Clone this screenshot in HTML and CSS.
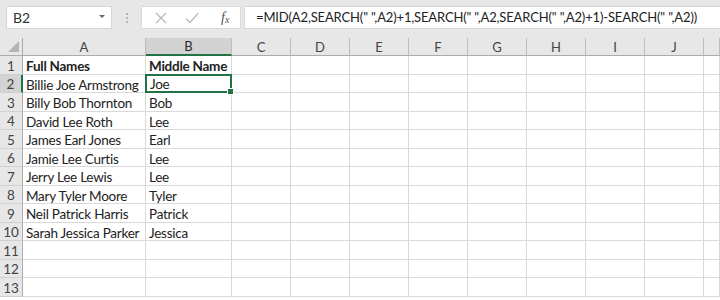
FILE: index.html
```html
<!DOCTYPE html>
<html>
<head>
<meta charset="utf-8">
<link rel="stylesheet" href="styles.css">
</head>
<body>
<div class="app">
  <div class="toolbar">
    <div class="namebox"><span>B2</span><span class="caret"></span></div>
    <div class="grip"><i></i><i></i><i></i></div>
    <div class="fbuttons">
      <svg class="ico x" width="12" height="12" viewBox="0 0 12 12"><path d="M1 1 L11 11 M11 1 L1 11" stroke="#b9b9b9" stroke-width="1.3" fill="none"/></svg>
      <svg class="ico ok" width="14" height="12" viewBox="0 0 14 12"><path d="M1 6.5 L5 10.5 L13 1.5" stroke="#b9b9b9" stroke-width="1.3" fill="none"/></svg>
      <span class="fx">f<sub>x</sub></span>
    </div>
    <div class="formula">=MID(A2,SEARCH(" ",A2)+1,SEARCH(" ",A2,SEARCH(" ",A2)+1)-SEARCH(" ",A2))</div>
  </div>
  <div class="sheet">
    <div class="hd corner"><span class="tri"></span></div>
    <div class="hd col">A</div>
    <div class="hd col sel">B</div>
    <div class="hd col">C</div>
    <div class="hd col">D</div>
    <div class="hd col">E</div>
    <div class="hd col">F</div>
    <div class="hd col">G</div>
    <div class="hd col">H</div>
    <div class="hd col">I</div>
    <div class="hd col">J</div>
    <div class="hd col"></div>

    <div class="hd row">1</div><div class="c b">Full Names</div><div class="c b">Middle Name</div><div class="c"></div><div class="c"></div><div class="c"></div><div class="c"></div><div class="c"></div><div class="c"></div><div class="c"></div><div class="c"></div><div class="c"></div>
    <div class="hd row sel">2</div><div class="c">Billie Joe Armstrong</div><div class="c active">Joe<span class="handle"></span></div><div class="c"></div><div class="c"></div><div class="c"></div><div class="c"></div><div class="c"></div><div class="c"></div><div class="c"></div><div class="c"></div><div class="c"></div>
    <div class="hd row">3</div><div class="c">Billy Bob Thornton</div><div class="c">Bob</div><div class="c"></div><div class="c"></div><div class="c"></div><div class="c"></div><div class="c"></div><div class="c"></div><div class="c"></div><div class="c"></div><div class="c"></div>
    <div class="hd row">4</div><div class="c">David Lee Roth</div><div class="c">Lee</div><div class="c"></div><div class="c"></div><div class="c"></div><div class="c"></div><div class="c"></div><div class="c"></div><div class="c"></div><div class="c"></div><div class="c"></div>
    <div class="hd row">5</div><div class="c">James Earl Jones</div><div class="c">Earl</div><div class="c"></div><div class="c"></div><div class="c"></div><div class="c"></div><div class="c"></div><div class="c"></div><div class="c"></div><div class="c"></div><div class="c"></div>
    <div class="hd row">6</div><div class="c">Jamie Lee Curtis</div><div class="c">Lee</div><div class="c"></div><div class="c"></div><div class="c"></div><div class="c"></div><div class="c"></div><div class="c"></div><div class="c"></div><div class="c"></div><div class="c"></div>
    <div class="hd row">7</div><div class="c">Jerry Lee Lewis</div><div class="c">Lee</div><div class="c"></div><div class="c"></div><div class="c"></div><div class="c"></div><div class="c"></div><div class="c"></div><div class="c"></div><div class="c"></div><div class="c"></div>
    <div class="hd row">8</div><div class="c">Mary Tyler Moore</div><div class="c">Tyler</div><div class="c"></div><div class="c"></div><div class="c"></div><div class="c"></div><div class="c"></div><div class="c"></div><div class="c"></div><div class="c"></div><div class="c"></div>
    <div class="hd row">9</div><div class="c">Neil Patrick Harris</div><div class="c">Patrick</div><div class="c"></div><div class="c"></div><div class="c"></div><div class="c"></div><div class="c"></div><div class="c"></div><div class="c"></div><div class="c"></div><div class="c"></div>
    <div class="hd row">10</div><div class="c">Sarah Jessica Parker</div><div class="c">Jessica</div><div class="c"></div><div class="c"></div><div class="c"></div><div class="c"></div><div class="c"></div><div class="c"></div><div class="c"></div><div class="c"></div><div class="c"></div>
    <div class="hd row">11</div><div class="c"></div><div class="c"></div><div class="c"></div><div class="c"></div><div class="c"></div><div class="c"></div><div class="c"></div><div class="c"></div><div class="c"></div><div class="c"></div><div class="c"></div>
    <div class="hd row">12</div><div class="c"></div><div class="c"></div><div class="c"></div><div class="c"></div><div class="c"></div><div class="c"></div><div class="c"></div><div class="c"></div><div class="c"></div><div class="c"></div><div class="c"></div>
    <div class="hd row">13</div><div class="c"></div><div class="c"></div><div class="c"></div><div class="c"></div><div class="c"></div><div class="c"></div><div class="c"></div><div class="c"></div><div class="c"></div><div class="c"></div><div class="c"></div>
  </div>
</div>
</body>
</html>
```

FILE: styles.css
```css
html, body {
  margin: 0;
  padding: 0;
  background: #ffffff;
}
.app {
  width: 720px;
  height: 300px;
  overflow: hidden;
  font-family: Lato, "Liberation Sans", sans-serif;
  color: #222;
}
.toolbar {
  height: 38px;
  box-sizing: border-box;
  background: #e7e7e7;
  display: flex;
  align-items: flex-start;
  padding: 6px 0 0 6px;
}
.namebox {
  width: 106px;
  height: 23px;
  box-sizing: border-box;
  background: #fff;
  border: 1px solid #d6d6d6;
  display: flex;
  align-items: center;
  justify-content: space-between;
  padding: 0 6px 0 6px;
  font-size: 14px;
  color: #333;
}
.caret {
  width: 0;
  height: 0;
  border-left: 3px solid transparent;
  border-right: 3px solid transparent;
  border-top: 3px solid #666;
  margin-top: -2px;
}
.grip {
  width: 29px;
  height: 23px;
  display: flex;
  flex-direction: column;
  align-items: center;
  justify-content: center;
  gap: 2px;
}
.grip i {
  display: block;
  width: 2px;
  height: 2px;
  background: #b5b5b5;
}
.fbuttons {
  width: 100px;
  height: 23px;
  box-sizing: border-box;
  background: #fff;
  border: 1px solid #dadada;
  display: flex;
  align-items: center;
  padding-left: 13px;
}
.ico.ok { margin-left: 18px; }
.fx {
  margin-left: 22px;
  font-family: "Liberation Serif", serif;
  font-style: italic;
  font-size: 14px;
  color: #555;
}
.fx sub {
  font-size: 10px;
  vertical-align: -1px;
}
.formula {
  flex: 1;
  height: 23px;
  box-sizing: border-box;
  margin-left: 3px;
  background: #fff;
  border: 1px solid #d6d6d6;
  border-right: none;
  padding-left: 11px;
  font-size: 13px;
  letter-spacing: -0.15px;
  line-height: 21px;
  white-space: nowrap;
  color: #222;
}
.sheet {
  display: grid;
  grid-template-columns: 23px 123px 86px repeat(8, 59px) 16px;
  grid-template-rows: 18px repeat(13, 18.5px);
  font-size: 13.5px;
  letter-spacing: -0.25px;
}
.hd {
  background: #e7e7e7;
  color: #444;
  font-size: 13px;
  letter-spacing: 0;
  box-sizing: border-box;
  display: flex;
  align-items: center;
  justify-content: center;
}
.col {
  border-right: 1px solid #bdbdbd;
  border-bottom: 1px solid #ababab;
}
.col.sel {
  background: #d3d3d3;
  border-bottom: 2px solid #217346;
  color: #2a2a2a;
}
.corner {
  border-right: 1px solid #ababab;
  border-bottom: 1px solid #ababab;
  position: relative;
}
.tri {
  position: absolute;
  right: 3px;
  bottom: 3px;
  width: 0;
  height: 0;
  border-left: 11px solid transparent;
  border-bottom: 11px solid #b5b5b5;
}
.row {
  border-right: 1px solid #ababab;
  border-bottom: 1px solid #d0d0d0;
  font-size: 13.5px;
  padding-top: 2px;
}
.row.sel {
  background: #d3d3d3;
  border-right: 2px solid #217346;
}
.c {
  box-sizing: border-box;
  border-right: 1px solid #d9d9d9;
  border-bottom: 1px solid #d9d9d9;
  padding: 3px 0 0 3px;
  display: flex;
  align-items: center;
  white-space: nowrap;
  overflow: visible;
}
.c.b { font-weight: bold; }
.c.active {
  position: relative;
  border: 2px solid #217346;
  margin: -1px 0 0 -1px;
  padding: 2px 0 0 3px;
}
.handle {
  position: absolute;
  right: -4px;
  bottom: -4px;
  width: 5px;
  height: 5px;
  background: #217346;
  border: 1px solid #fff;
}
```
